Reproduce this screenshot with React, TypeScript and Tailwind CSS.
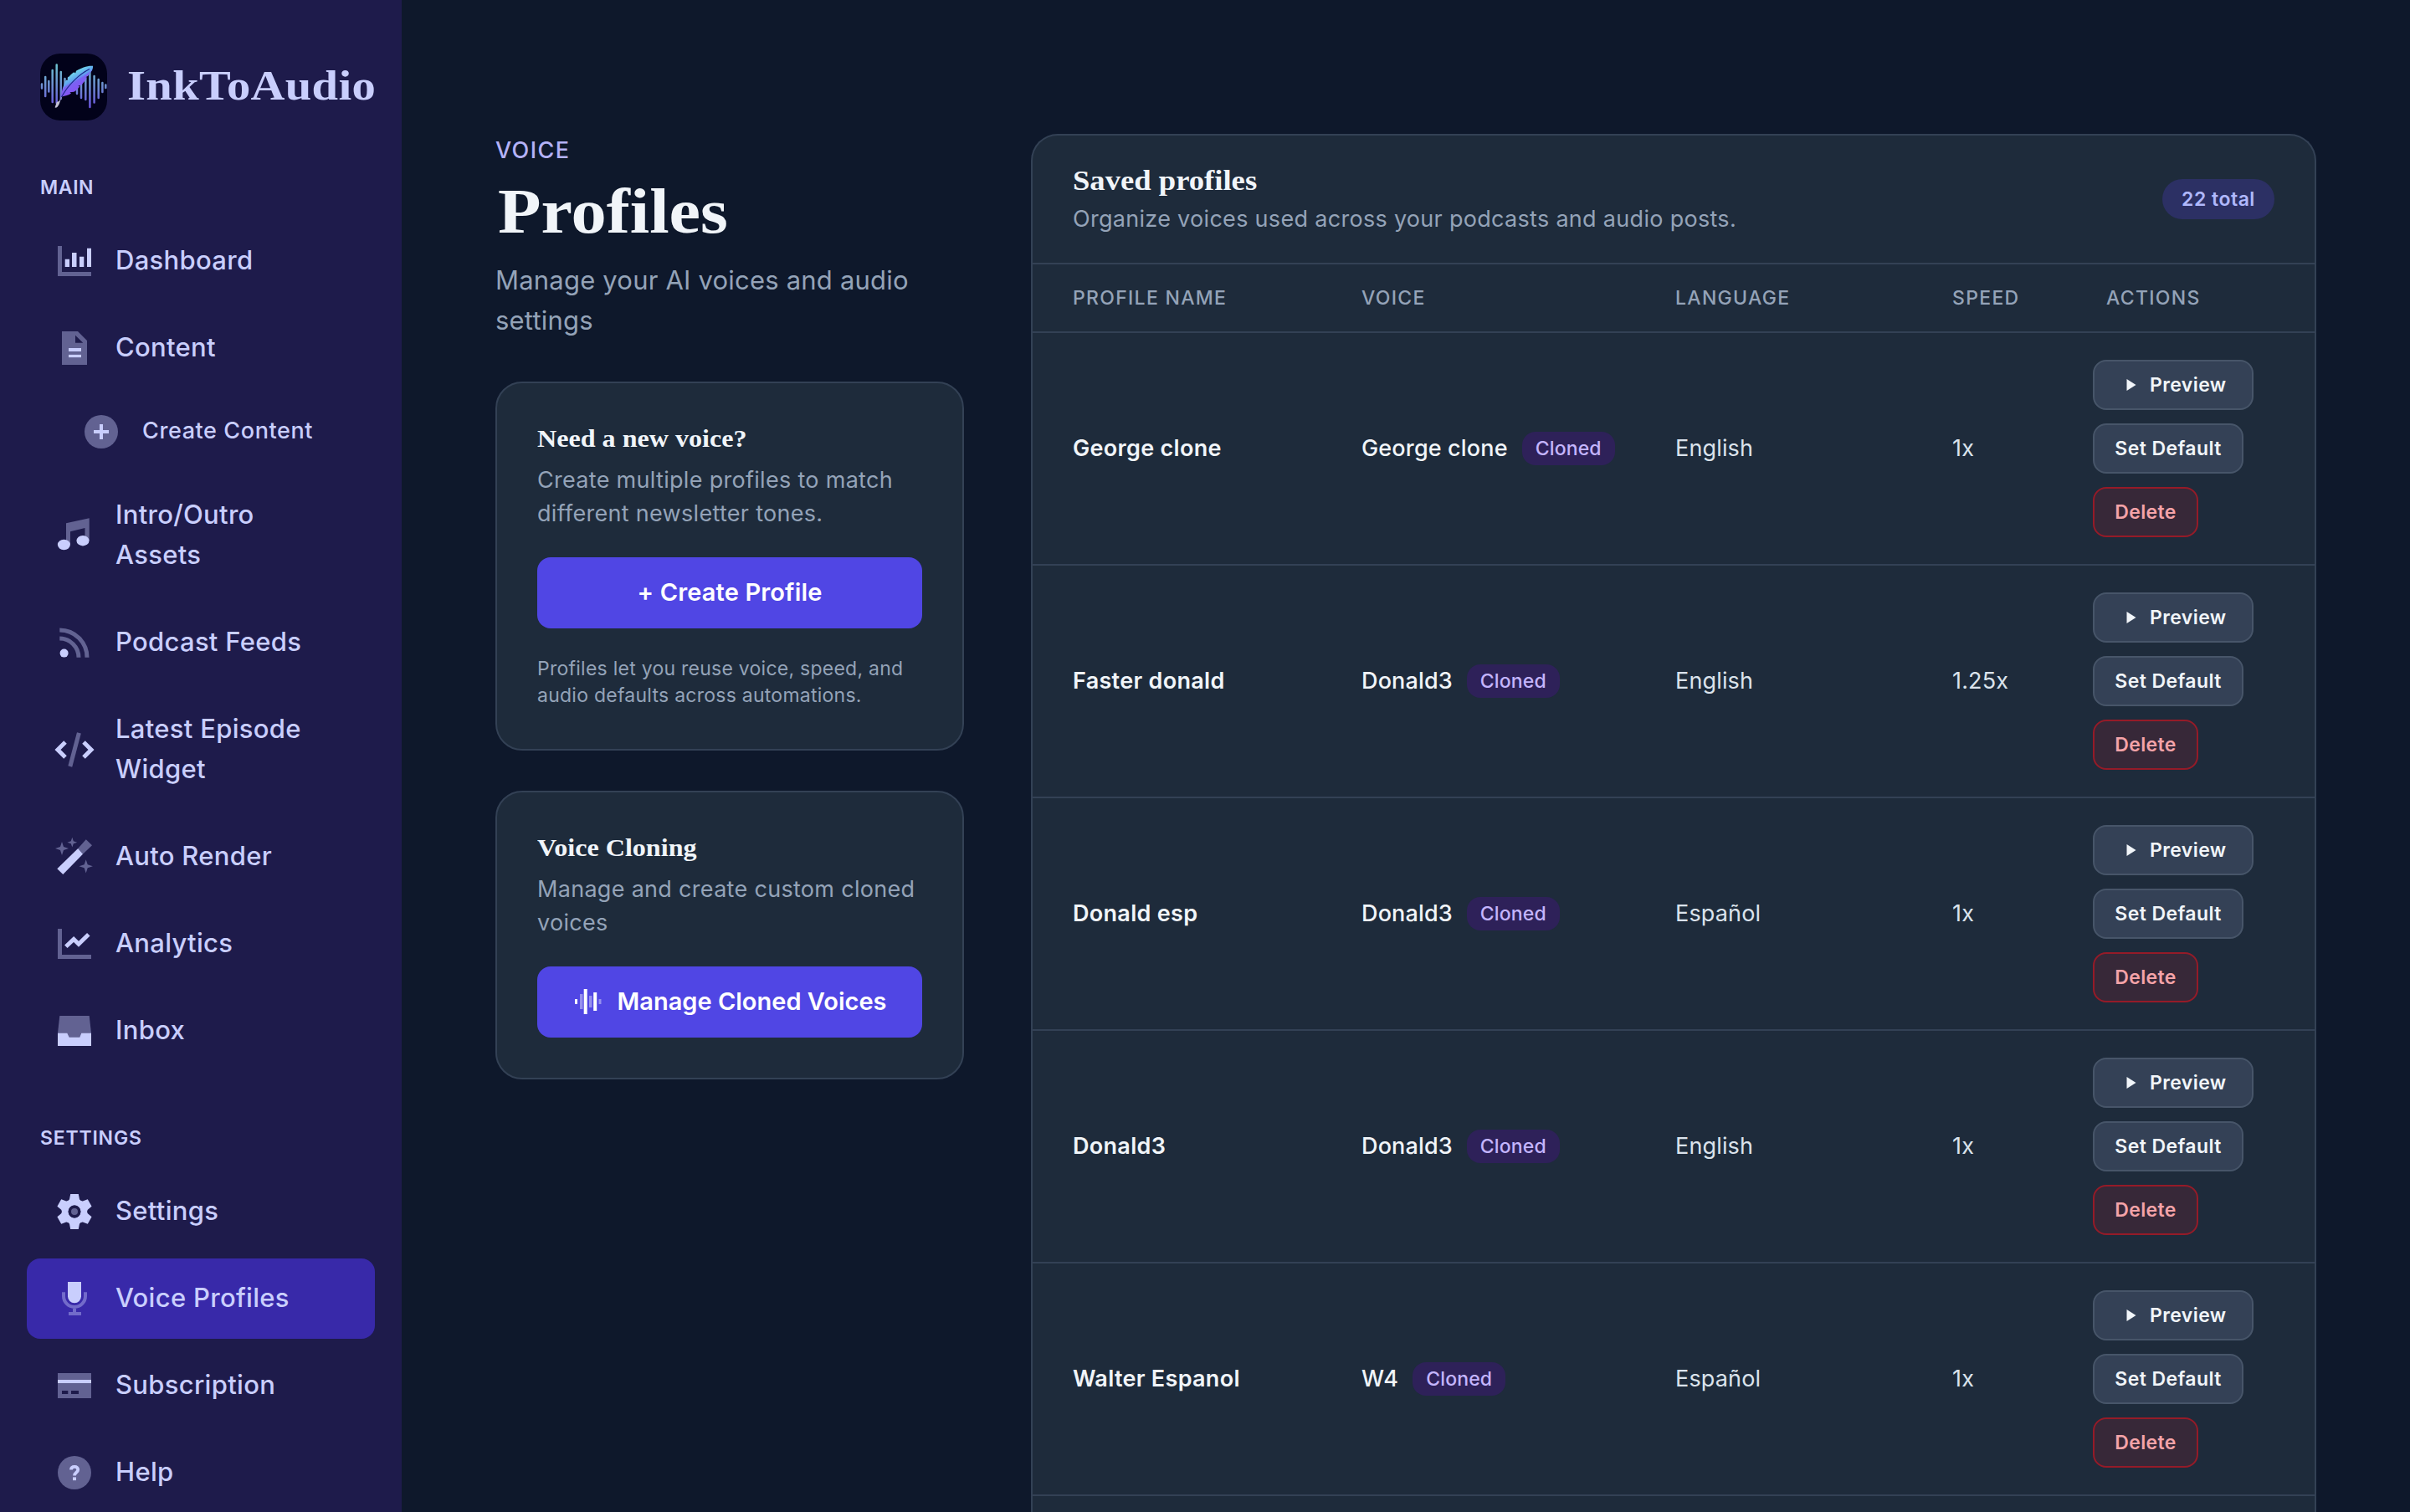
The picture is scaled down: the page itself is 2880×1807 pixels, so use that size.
import React from 'react';
import { clsx } from 'clsx';

// Two-tone nav icons, 50x50 viewBox. "dim" parts are drawn at 40% opacity.
const DIM = 0.4;

const icons: Record<string, React.ReactNode> = {
  dashboard: (
    <>
      <path opacity={DIM} d="M5 7h5v31h35v5H5z" />
      <path d="M13.7 22.7H19V32h-5.3zM22 15h5.5v17H22zM31 19.7h5.3V32H31zM40 9.7h5V32h-5z" />
    </>
  ),
  content: (
    <>
      <path opacity={DIM} fillRule="evenodd" d="M10 5h19l11 11v29H10zM26 9.7v9h9.3zM18 25v4h15v-4zM18 32.7v3.6h15v-3.6z" />
      <path d="M18 25h15v4H18zM18 32.7h15v3.6H18z" />
    </>
  ),
  create: (
    <>
      <circle opacity={DIM} cx="25" cy="25" r="20" />
      <path d="M23 16h4v7h7v4h-7v7h-4v-7h-7v-4h7z" />
    </>
  ),
  music: (
    <>
      <path opacity={DIM} d="M15 10.3l27.7-6V31h-5.2V16L20 20.3V36h-5z" />
      <ellipse cx="12.4" cy="36" rx="7.5" ry="6.2" />
      <ellipse cx="35" cy="31.2" rx="7.5" ry="6.2" />
    </>
  ),
  podcast: (
    <>
      <g opacity={DIM} fill="none" stroke="currentColor" strokeWidth="5">
        <path d="M7.3 10a32.7 32.7 0 0 1 32.7 32.7" />
        <path d="M7.3 20a22.7 22.7 0 0 1 22.7 22.7" />
      </g>
      <circle cx="12.6" cy="37.6" r="5" />
    </>
  ),
  code: (
    <g fill="none" stroke="currentColor" strokeWidth="5">
      <path opacity={DIM} d="M30.4 4.8L19.8 45" />
      <path d="M14 16l-9 9 9 9M36 16l9 9-9 9" />
    </g>
  ),
  wand: (
    <>
      <path opacity={DIM} d="M29.2 15L38.8 4.2 46 11.2 35 21.8zM10 7l2 6 6 2-6 2-2 6-2-6-6-2 6-2zM22.3 1.8l1.5 4.4 4.4 1.5-4.4 1.5-1.5 4.4-1.5-4.4-4.4-1.5 4.4-1.5zM38.7 28.2l2 6 6.2 2-6.2 2-2 6.2-2-6.2-6.2-2 6.2-2z" />
      <path d="M4.3 39.3L29.2 15l5.8 6.8L11.3 46z" />
    </>
  ),
  analytics: (
    <>
      <path opacity={DIM} d="M5 7h5v31h35v5H5z" />
      <path fill="none" stroke="currentColor" strokeWidth="5" d="M14.8 28.2l9.3-8.8 5.9 5.8 11.8-11.4" />
    </>
  ),
  inbox: (
    <>
      <path opacity={DIM} d="M7.3 7h35.4L45 27.7V43H5V27.7z" />
      <path d="M5 27.7h11.3l2.4 5h12.6l2-5H45V43H5z" />
    </>
  ),
  settings: (
    <>
      <circle cx="25" cy="25" r="11.3" fill="none" stroke="currentColor" strokeWidth="7.8" />
      {[0, 60, 120, 180, 240, 300].map((deg) => (
        <path key={deg} d="M20.2 4h9.6l1.2 6.2 2.2 3.2H16.8l2.2-3.2z" transform={`rotate(${deg} 25 25)`} />
      ))}
      <circle cx="25" cy="25" r="7.4" className="fill-[#1e1b4b]" />
      <circle opacity={DIM} cx="25" cy="25" r="4" />
    </>
  ),
  mic: (
    <>
      <g opacity={DIM}>
        <path fill="none" stroke="currentColor" strokeWidth="4" d="M12 17.3v4.7a13 13 0 0 0 26 0v-4.7" />
        <path d="M23 36.9h4V41h6v4H18v-4h5z" />
      </g>
      <path d="M17 5h16v17.3a8 8 0 0 1-16 0z" />
    </>
  ),
  card: (
    <>
      <path opacity={DIM} fillRule="evenodd" d="M5 10h40v30H5zM5 18v4h40v-4zM10 31v4h7.3v-4zM21 31v4h9v-4z" />
      <path d="M5 18h40v4H5z" />
    </>
  ),
  help: (
    <>
      <circle opacity={DIM} cx="25" cy="25" r="20" />
      <path fill="none" stroke="currentColor" strokeWidth="3.8" d="M21 21.5c0-2.2 1.6-3.6 4.2-3.6 2.4 0 4 1.5 4 3.5 0 3.4-4.2 3.2-4.2 7.1" />
      <path d="M23 30.4h4v3.8h-4z" />
    </>
  ),
};

const mainItems = [
  { label: 'Dashboard', icon: 'dashboard' },
  { label: 'Content', icon: 'content' },
  { label: 'Create Content', icon: 'create', sub: true },
  { label: 'Intro/Outro Assets', icon: 'music' },
  { label: 'Podcast Feeds', icon: 'podcast' },
  { label: 'Latest Episode Widget', icon: 'code' },
  { label: 'Auto Render', icon: 'wand' },
  { label: 'Analytics', icon: 'analytics' },
  { label: 'Inbox', icon: 'inbox' },
];

const settingsItems = [
  { label: 'Settings', icon: 'settings' },
  { label: 'Voice Profiles', icon: 'mic', active: true },
  { label: 'Subscription', icon: 'card' },
  { label: 'Help', icon: 'help' },
];

const profiles = [
  { name: 'George clone', voice: 'George clone', language: 'English', speed: '1x' },
  { name: 'Faster donald', voice: 'Donald3', language: 'English', speed: '1.25x' },
  { name: 'Donald esp', voice: 'Donald3', language: 'Español', speed: '1x' },
  { name: 'Donald3', voice: 'Donald3', language: 'English', speed: '1x' },
  { name: 'Walter Espanol', voice: 'W4', language: 'Español', speed: '1x' },
];

// [x, top, bottom] of each bar behind the feather
const logoBars = [
  [2, 36.5, 41.5], [6.2, 28, 51], [10.3, 33, 45.5], [14.7, 20, 58], [19.7, 13.5, 59], [24.8, 22, 54],
  [29.5, 30, 44], [34, 29, 40], [44, 36, 48], [49, 34, 53], [54.3, 30, 55], [59.4, 22, 64], [64.6, 27, 58.5],
  [69.7, 31, 53], [74.4, 35, 46], [78.3, 37.5, 41],
];

function Logo() {
  return (
    <svg viewBox="0 0 80 80" className="w-20 h-20 rounded-3xl bg-[#02021a] shrink-0">
      <defs>
        <linearGradient id="bars" gradientUnits="userSpaceOnUse" x1="0" y1="12" x2="0" y2="64">
          <stop offset="0" stopColor="#6cc4cf" />
          <stop offset="0.5" stopColor="#6d8fd0" />
          <stop offset="1" stopColor="#6a55dd" />
        </linearGradient>
        <linearGradient id="feather" gradientUnits="userSpaceOnUse" x1="37" y1="23" x2="47" y2="40">
          <stop offset="0" stopColor="#74dcea" />
          <stop offset="0.45" stopColor="#5fa4f0" />
          <stop offset="0.6" stopColor="#7a63f2" />
          <stop offset="1" stopColor="#8457f5" />
        </linearGradient>
      </defs>
      <g stroke="url(#bars)" strokeWidth="2.5" strokeLinecap="round">
        {logoBars.map(([x, y1, y2]) => (
          <path key={x} d={`M${x} ${y1}L${x + 0.01} ${y2}`} />
        ))}
      </g>
      <path
        fill="url(#feather)"
        d="M63 14.8C56 14.400 49 17.200 43 20.800l-.9 2.600-1.700-1.200C37.500 24.200 35 26.800 32.900 29.400l.4 2.400-2.300-.1C28 37 25.500 44 25 52c4.400-1.800 8.200-1.400 12-4.400l-1.600-1.300 5-.5c2.600-1.700 4.600-3.700 6.800-6.300l-2-.8 4.200-1.100c3.200-3.400 4.800-6 6.600-9l-1.500-.4 2.600-1.500 4.900-6.500c.9-2.300 1.300-3.700 1-5.400z"
      />
      <path fill="none" stroke="#1c2a8c" strokeWidth="1.2" d="M59 18.500C48 24 34 36 25.500 52" />
      <path fill="none" stroke="#8f93b8" strokeWidth="1.2" d="M25.500 52l-2.500 5.500" />
      <path fill="#c4c2d6" d="M23.800 56.500l-4 1.500-2.200 6.500 1.600.3c2.400-1.800 4.200-4.800 4.600-8.300z" />
    </svg>
  );
}

interface NavItemProps {
  label: string;
  icon: string;
  sub?: boolean;
  active?: boolean;
}

function NavItem({ label, icon, sub, active }: NavItemProps) {
  return (
    <a
      className={clsx(
        'flex items-center gap-6 rounded-2xl font-medium',
        sub
          ? 'h-[88px] pl-16 text-[27px] leading-10 tracking-[0.6px]'
          : 'py-6 pl-8 pr-16 text-[31px] leading-[48px] tracking-[0.3px]',
        active && 'bg-[#3829a9]'
      )}
    >
      <svg viewBox="0 0 50 50" fill="currentColor" className="w-[50px] h-[50px] -my-2 shrink-0">
        {icons[icon]}
      </svg>
      <span className="relative -top-px">{label}</span>
    </a>
  );
}

function Sidebar() {
  return (
    <aside className="w-[480px] shrink-0 bg-[#1e1b4b] text-[#c9cefd] px-8 pt-16 overflow-hidden">
      <div className="flex items-center gap-6 px-4 h-20">
        <Logo />
        <span className="inline-block origin-left scale-x-[1.11] font-['Liberation_Serif',serif] font-bold text-[51px] leading-none tracking-[0.3px] whitespace-nowrap -mt-1">
          InkToAudio
        </span>
      </div>
      <h2 className="mt-[60px] mb-5 px-4 text-[23px] leading-10 font-semibold tracking-[0.6px]">MAIN</h2>
      <nav className="flex flex-col gap-2">
        {mainItems.map((item) => (
          <NavItem key={item.label} {...item} />
        ))}
      </nav>
      <h2 className="mt-[60px] mb-5 px-4 text-[23px] leading-10 font-semibold tracking-[0.8px]">SETTINGS</h2>
      <nav className="flex flex-col gap-2">
        {settingsItems.map((item) => (
          <NavItem key={item.label} {...item} />
        ))}
      </nav>
    </aside>
  );
}

function WaveIcon() {
  return (
    <svg viewBox="0 0 34 32" fill="currentColor" className="w-[34px] h-8 shrink-0">
      <path d="M2 13h3v6H2zM12.7 1h4v30h-4zM24.2 5h4v22h-4z" />
      <path opacity={DIM} d="M8 7h3.5v18H8zM19 9h3.5v14H19zM30.5 13h3v6h-3z" />
    </svg>
  );
}

function SideCard({ title, text, children }: { title: string; text: string; children: React.ReactNode }) {
  return (
    <div className="rounded-[32px] border-2 border-[#334155] bg-[#1e2b3b] p-12">
      <h3 className="mb-3 origin-left scale-x-[1.07] font-['Liberation_Serif',serif] font-bold text-[30px] leading-9 text-[#f1f5f9]">
        {title}
      </h3>
      <p className="mb-8 text-[27px] leading-10 tracking-[0.3px] text-[#94a3b8]">{text}</p>
      {children}
    </div>
  );
}

function ProfileRow({ profile }: { profile: (typeof profiles)[number] }) {
  return (
    <div className="grid grid-cols-[345px_375px_331px_168px_1fr] items-center pl-12 h-[278px] border-b-2 border-[#334155] text-[27px] tracking-[0.15px]">
      <span className="font-semibold text-[#f1f5f9] tracking-[0.3px]">{profile.name}</span>
      <div className="flex items-center gap-[17px]">
        <span className="font-medium text-[#f1f5f9]">{profile.voice}</span>
        <span className="flex items-center h-10 px-4 rounded-2xl bg-[#2e2159] text-[#c4b5fd] text-[23px] font-medium">
          Cloned
        </span>
      </div>
      <span className="text-[#dbe3ec]">{profile.language}</span>
      <span className="text-[#dbe3ec]">{profile.speed}</span>
      <div className="flex flex-col items-start gap-4 text-[23px] font-semibold tracking-[0.4px]">
        <button className="flex items-center gap-4 w-48 h-[60px] pl-[38px] rounded-2xl border-2 border-[#475569] bg-[#344156] text-[#f1f5f9]">
          <svg viewBox="0 0 12 14" fill="currentColor" className="w-3 h-3.5">
            <path d="M0.5 0l11 7-11 7z" />
          </svg>
          Preview
        </button>
        <button className="w-[180px] h-[60px] rounded-2xl border-2 border-[#475569] bg-[#344156] text-[#f1f5f9]">
          Set Default
        </button>
        <button className="w-[126px] h-[60px] rounded-2xl border-2 border-[#951b28] bg-[#372838] text-[#f4a3a8]">
          Delete
        </button>
      </div>
    </div>
  );
}

export default function App() {
  return (
    <div className="flex w-[2880px] h-[1807px] overflow-hidden bg-[#0e182b] font-['Inter',sans-serif]">
      <Sidebar />

      <main className="flex items-start gap-20 pl-28 pt-40">
        {/* Left Side - Title and Cards */}
        <section className="w-[560px] shrink-0">
          <p className="text-[27px] leading-10 font-medium tracking-[1.4px] text-[#b4b2f8]">VOICE</p>
          <h1 className="mt-2 ml-[3px] origin-left scale-x-[1.11] font-['Liberation_Serif',serif] font-bold text-[76px] leading-[88px] [font-variant-ligatures:none] text-[#f1f5f9]">
            Profiles
          </h1>
          <p className="mt-[15px] mb-[49px] text-[31px] leading-[48px] tracking-[0.2px] text-[#94a3b8]">
            Manage your AI voices and audio settings
          </p>

          <div className="flex flex-col gap-12">
            <SideCard title="Need a new voice?" text="Create multiple profiles to match different newsletter tones.">
              <button className="w-full h-[85px] pb-0.5 rounded-2xl bg-[#5046e4] text-white text-[29px] font-semibold tracking-[0.15px]">
                + Create Profile
              </button>
              <p className="mt-8 text-[23px] leading-8 tracking-[0.25px] text-[#94a3b8]">
                Profiles let you reuse voice, speed, and audio defaults across automations.
              </p>
            </SideCard>
            <SideCard title="Voice Cloning" text="Manage and create custom cloned voices">
              <button className="flex items-center justify-center gap-[19px] w-full h-[85px] pb-px rounded-2xl bg-[#5046e4] text-white text-[29px] font-semibold">
                <WaveIcon />
                Manage Cloned Voices
              </button>
            </SideCard>
          </div>
        </section>

        {/* Saved profiles table */}
        <section className="w-[1536px] shrink-0 self-stretch rounded-t-[32px] border-2 border-b-0 border-[#334155] bg-[#1e2b3b]">
          <div className="flex items-center justify-between h-[154px] px-12 border-b-2 border-[#334155]">
            <div>
              <h2 className="mb-1 origin-left scale-x-[1.11] font-['Liberation_Serif',serif] font-bold text-[33px] leading-[44px] [font-variant-ligatures:none] text-[#f1f5f9]">
                Saved profiles
              </h2>
              <p className="text-[27px] leading-10 tracking-[0.3px] text-[#94a3b8]">
                Organize voices used across your podcasts and audio posts.
              </p>
            </div>
            <span className="flex items-center justify-center w-[134px] h-12 rounded-full bg-[#2c3064] text-[#b0b8fc] text-[23px] font-semibold tracking-[0.5px]">
              22 total
            </span>
          </div>

          <div className="grid grid-cols-[345px_375px_331px_168px_1fr] items-center h-[82px] pl-12 border-b-2 border-[#334155] text-[23px] font-medium tracking-[1.3px] text-[#94a3b8]">
            <span>PROFILE NAME</span>
            <span>VOICE</span>
            <span>LANGUAGE</span>
            <span>SPEED</span>
            <span className="pl-4">ACTIONS</span>
          </div>

          {profiles.map((profile) => (
            <ProfileRow key={profile.name} profile={profile} />
          ))}
        </section>
      </main>
    </div>
  );
}
